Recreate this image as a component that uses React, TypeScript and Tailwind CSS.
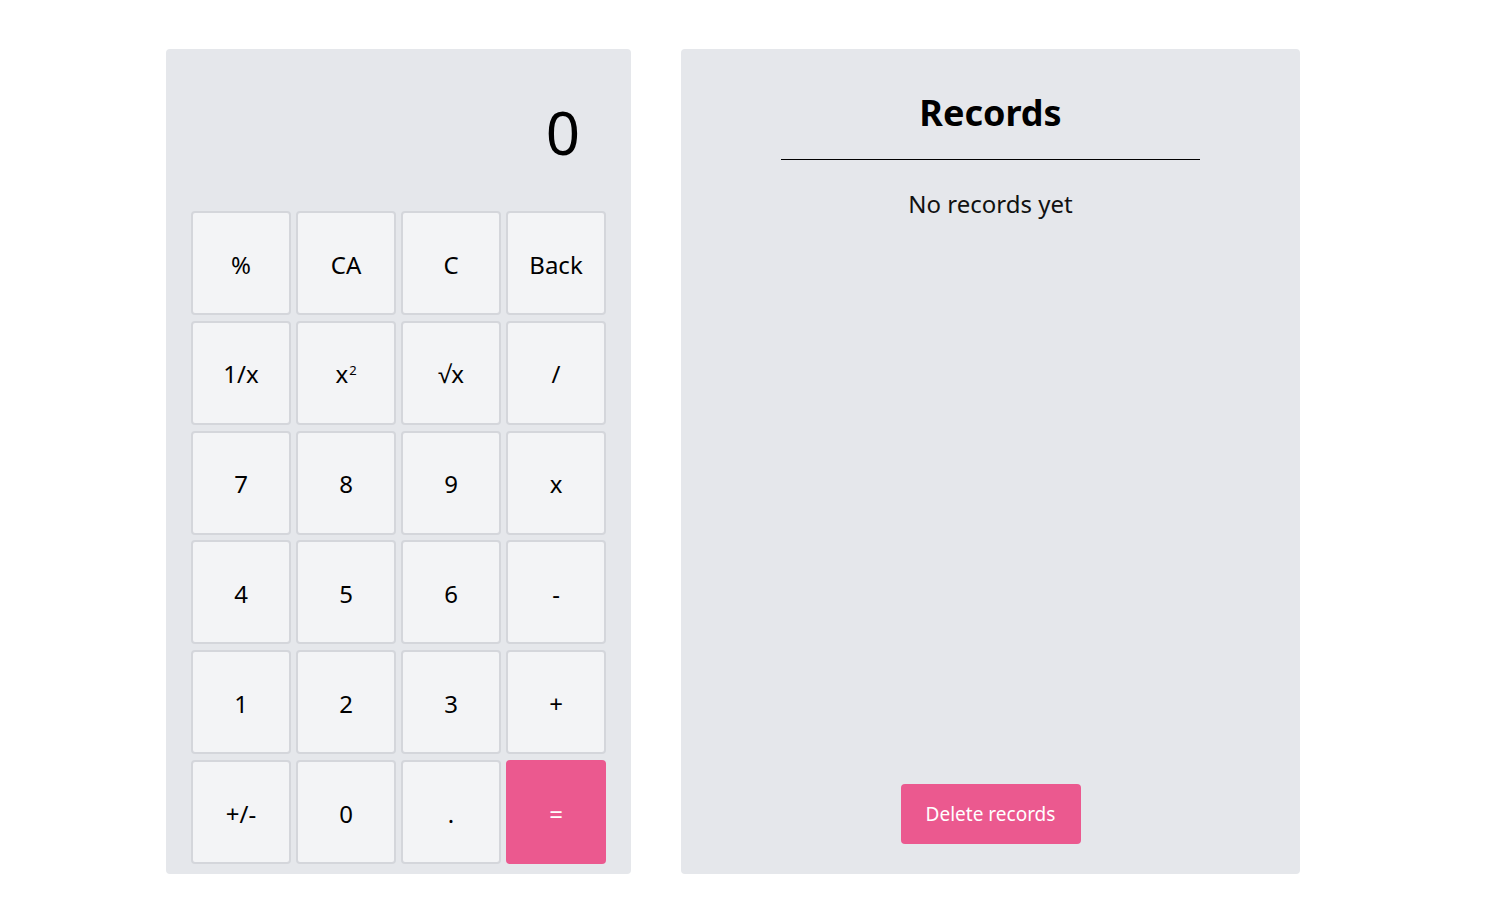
import { ReactNode } from "react";

const keys: ReactNode[] = [
  "%",
  "CA",
  "C",
  "Back",
  "1/x",
  <span key="sq">
    x<sup className="text-[13px] relative -top-[8px] ml-[1px]">2</sup>
  </span>,
  "√x",
  "/",
  "7",
  "8",
  "9",
  "x",
  "4",
  "5",
  "6",
  "-",
  "1",
  "2",
  "3",
  "+",
  "+/-",
  "0",
  ".",
];

function Key({ children }: { children: ReactNode }) {
  return (
    <button
      type="button"
      className="h-[104px] pt-[3px] rounded-[4px] border-2 border-[#d4d6db] bg-[#f3f4f6] text-2xl text-black"
    >
      {children}
    </button>
  );
}

export default function App() {
  return (
    <div
      className="min-h-screen bg-white pt-[49px] pl-[166px] flex gap-[50px]"
      style={{ fontFamily: '"Noto Sans", "Open Sans", sans-serif' }}
    >
      <div className="w-[465px] h-[825px] bg-[#e5e7eb] rounded-[4px] px-[25px] pb-[10px] flex flex-col">
        <div className="flex-1 flex items-center justify-end pr-[26px] pt-[4px] text-6xl text-black">
          0
        </div>
        <div className="grid grid-cols-4 gap-x-[5px] gap-y-[5.8px]">
          {keys.map((k, i) => (
            <Key key={i}>{k}</Key>
          ))}
          <button
            type="button"
            className="h-[104px] pt-[3px] rounded-[4px] bg-[#eb598f] text-2xl text-white"
          >
            =
          </button>
        </div>
      </div>

      <div className="w-[619px] h-[825px] bg-[#e5e7eb] rounded-[4px] flex flex-col items-center pt-[46px] pb-[30px]">
        <h2 className="text-4xl font-bold text-black leading-none">Records</h2>
        <div className="w-[419px] border-t border-black mt-[28px]" />
        <p className="mt-[28px] text-2xl text-[#111]">No records yet</p>
        <div className="flex-1" />
        <button
          type="button"
          className="w-[180px] h-[60px] rounded-[4px] bg-[#eb598f] text-[19px] text-white"
        >
          Delete records
        </button>
      </div>
    </div>
  );
}
